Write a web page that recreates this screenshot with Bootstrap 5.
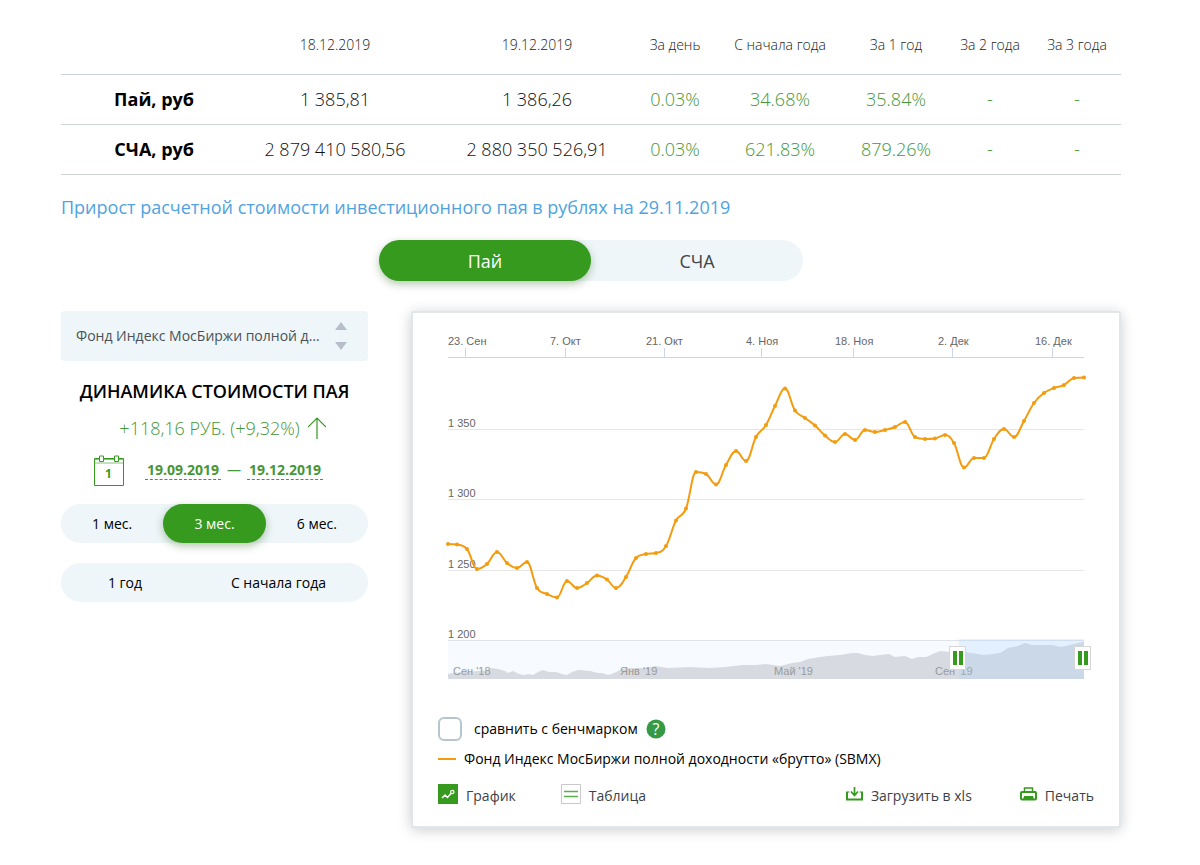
<!DOCTYPE html>
<html lang="ru">
<head>
<meta charset="utf-8">
<meta name="viewport" content="width=device-width, initial-scale=1">
<title>Динамика стоимости пая</title>
<link href="https://cdn.jsdelivr.net/npm/bootstrap@5.3.0/dist/css/bootstrap.min.css" rel="stylesheet">
<style>
  body { font-family: "Open Sans", "Noto Sans", sans-serif; font-size: 14px; line-height: 20px; color: #000; background: #fff; }
  .page { padding: 24px 79px 24px 61px; }
  .green { color: #46963a; }
  .rates { table-layout: fixed; font-weight: 300; text-align: center; }
  .rates th, .rates td { height: 50px; padding: 0; border-bottom: 1px solid #cbd3d6; vertical-align: middle; font-size: 18px; background: none; }
  .rates thead th { font-size: 14px; font-weight: 300; padding-bottom: 8px; color: #1a1a1a; }
  .rates tbody th { font-weight: 700; text-align: right; padding-right: 40px; }
  .rates tbody td { color: #111; }
  .rates tbody td.green { color: #46963a; }
  .rates tr > :last-child { padding-right: 3px; }
  .c-name { width: 173px; } .c-date { width: 202px; } .c-day { width: 74px; } .c-ytd { width: 136px; }
  .c-y1 { width: 96px; } .c-y2 { width: 92px; } .c-y3 { width: 85px; }
  .subtitle { font-size: 18px; line-height: 24px; font-weight: 400; color: #50a3e0; margin: 20px 0 21px; }
  .pills { background: #eef6f9; border-radius: 21px; }
  .pills button { border: 0; background: none; border-radius: 21px; height: 39px; padding: 1px 0 0; color: #000; }
  .pills .on { background: #359a1e; color: #fff; box-shadow: 0 3px 8px rgba(40, 90, 20, .35); }
  .tabs-main { width: 424px; margin: 0 auto 30px; }
  .tabs-main button { height: 41px; font-size: 18px; color: #444; }
  .main-grid { gap: 43px; }
  .side { width: 307px; }
  .fund { appearance: none; height: 50px; border: 0; border-radius: 4px; background: #eef6f9; color: #4a5157; padding: 0 45px 0 15px; text-overflow: ellipsis; }
  .fund-arrows { right: 21px; top: 10px; pointer-events: none; }
  .side h2 { font-size: 18px; line-height: 24px; font-weight: 600; margin: 18px 0 12px; }
  .gain { font-size: 18px; line-height: 26px; font-weight: 300; padding-left: 16px; }
  .dates { margin: 14px 0 18px 33px; font-weight: 700; gap: 21px; }
  .date-range { gap: 6px; }
  .dates a { color: #46963a; border-bottom: 1px dashed #46963a; text-decoration: none; padding: 0 2px; line-height: 19px; }
  .periods { margin-bottom: 20px; }
  .chart-card { border: 2px solid #e1e6ea; border-radius: 2px; box-shadow: 0 2px 14px rgba(0, 0, 0, .2); padding: 12px 25px 18px; min-width: 0; }
  .chart-card svg.plot { font: 11px "Liberation Sans", sans-serif; width: 100%; height: auto; display: block; overflow: visible; }
  .compare { margin-top: 32px; }
  .form-check-input.bench[type=checkbox] { width: 24px; height: 24px; margin: 0; border: 2px solid #b7c5ce; border-radius: 6px; }
  .legend-line { width: 18px; height: 2px; background: #f39c0f; }
  .help { background: none; border: 0; padding: 0; }
  .tools { margin-top: 15px; }
  .tools a { color: #3c4248; text-decoration: none; }
  .tools svg { margin-bottom: 4px; }
  .tab-chart { margin-right: 45px; }
</style>
</head>
<body>
<main class="page">
  <table class="rates w-100">
    <colgroup><col class="c-name"><col class="c-date"><col class="c-date"><col class="c-day"><col class="c-ytd"><col class="c-y1"><col class="c-y2"><col class="c-y3"></colgroup>
    <thead>
      <tr><th></th><th scope="col">18.12.2019</th><th scope="col">19.12.2019</th><th scope="col">За день</th><th scope="col">С начала года</th><th scope="col">За 1 год</th><th scope="col">За 2 года</th><th scope="col">За 3 года</th></tr>
    </thead>
    <tbody>
      <tr><th scope="row">Пай, руб</th><td>1 385,81</td><td>1 386,26</td><td class="green">0.03%</td><td class="green">34.68%</td><td class="green">35.84%</td><td class="green">-</td><td class="green">-</td></tr>
      <tr><th scope="row">СЧА, руб</th><td>2 879 410 580,56</td><td>2 880 350 526,91</td><td class="green">0.03%</td><td class="green">621.83%</td><td class="green">879.26%</td><td class="green">-</td><td class="green">-</td></tr>
    </tbody>
  </table>

  <h1 class="subtitle">Прирост расчетной стоимости инвестиционного пая в рублях на 29.11.2019</h1>

  <div class="pills tabs-main d-flex">
    <button type="button" class="on w-50">Пай</button>
    <button type="button" class="w-50">СЧА</button>
  </div>

  <div class="main-grid d-flex align-items-start">
    <aside class="side flex-shrink-0">
      <div class="position-relative">
        <select class="fund w-100" aria-label="Фонд">
          <option>Фонд Индекс МосБиржи полной доходности «брутто» (SBMX)</option>
        </select>
        <svg class="fund-arrows position-absolute" width="12" height="30" aria-hidden="true"><path d="M6 1l6 8H0zM6 29l6-8H0z" fill="#b5bfc9"/></svg>
      </div>
      <h2 class="text-center">ДИНАМИКА СТОИМОСТИ ПАЯ</h2>
      <div class="gain green d-flex justify-content-center align-items-center gap-2">
        <span>+118,16 РУБ. (+9,32%)</span>
        <svg width="18" height="22" fill="none" stroke="#359a1e" stroke-width="1.2" aria-hidden="true"><path d="M9 22V1M0 10L9 1l9 9"/></svg>
      </div>
      <div class="dates green d-flex align-items-center">
        <svg width="30" height="31" fill="none" stroke="#359a1e" aria-hidden="true">
          <path d="M.5 3.5h29v27H.5z"/><path d="M1 4.500h28M1 8h28" stroke-opacity=".6"/><path d="M5.500 1h4v5.500h-4zM20.500 1h4v5.500h-4z" fill="#fff"/>
          <text x="11" y="23" font-size="12" font-weight="700" fill="#359a1e" stroke="none">1</text>
        </svg>
        <div class="date-range d-flex align-items-center">
          <a href="#">19.09.2019</a><span class="fw-normal">—</span><a href="#">19.12.2019</a>
        </div>
      </div>
      <div class="pills periods d-flex">
        <button type="button" class="flex-fill w-25">1 мес.</button>
        <button type="button" class="flex-fill w-25 on">3 мес.</button>
        <button type="button" class="flex-fill w-25">6 мес.</button>
      </div>
      <div class="pills d-flex">
        <button type="button" class="col-5">1 год</button>
        <button type="button" class="flex-fill">С начала года</button>
      </div>
    </aside>

    <section class="chart-card flex-fill">
      <svg class="plot" viewBox="0 0 656 360" role="img" aria-label="График стоимости пая">
        <path d="M10 104.5h636M10 174.5h636M10 245.5h636" stroke="#e6e6e6"/>
        <path d="M10 32.5h636M27.5 23v9M127.5 23v9M226.5 23v9M323.5 23v9M415.5 23v9M514.5 23v9M614.5 23v9" stroke="#ccd6eb" fill="none"/>
        <g fill="#666">
          <text x="10" y="20">23. Сен</text><text x="112" y="20">7. Окт</text><text x="208" y="20">21. Окт</text><text x="308" y="20">4. Ноя</text><text x="397" y="20">18. Ноя</text><text x="500" y="20">2. Дек</text><text x="597" y="20">16. Дек</text>
          <text x="10" y="102">1 350</text><text x="10" y="172">1 300</text><text x="10" y="243">1 250</text><text x="10" y="313">1 200</text>
        </g>
        <rect x="10" y="315" width="636" height="39" fill="#f7fbff"/>
        <path d="M10 315.5h636" stroke="#dfe4ea"/>
        <path id="history" fill="#d7dbe1"/>
        <g fill="#999"><text x="15" y="350">Сен '18</text><text x="182" y="350">Янв '19</text><text x="336" y="350">Май '19</text><text x="497" y="350">Сен '19</text></g>
        <rect x="521" y="314" width="125" height="40" fill="#a8d0ff" fill-opacity=".25"/>
        <g id="handles"></g>
        <path id="price" fill="none" stroke="#f39c0f" stroke-width="2" stroke-linejoin="round"/>
        <g id="dots" fill="#f39c0f"></g>
      </svg>
      <div class="compare d-flex align-items-center">
        <input class="form-check-input bench" type="checkbox" id="bench">
        <label for="bench" class="ms-2 ps-1">сравнить с бенчмарком</label>
        <button type="button" class="help ms-2 d-flex" aria-label="Справка">
          <svg width="20" height="20" aria-hidden="true"><circle cx="10" cy="10" r="9.5" fill="#359a43"/><text x="10" y="16" text-anchor="middle" font-size="16" fill="#fff">?</text></svg>
        </button>
      </div>
      <div class="d-flex align-items-center mt-2"><span class="legend-line me-2"></span>Фонд Индекс МосБиржи полной доходности «брутто» (SBMX)</div>
      <div class="tools d-flex align-items-center">
        <a href="#" class="tab-chart d-flex align-items-center gap-2">
          <svg width="20" height="20" aria-hidden="true"><path d="M0 0h20v20H0z" fill="#359a1e"/><path d="M4 14l3-3 2.500 2.500L13 9.500" fill="none" stroke="#fff" stroke-width="1.500"/><circle cx="14.300" cy="8" r="1.700" fill="none" stroke="#fff" stroke-width="1.200"/></svg>График</a>
        <a href="#" class="d-flex align-items-center gap-2 me-auto">
          <svg width="20" height="20" fill="none" aria-hidden="true"><path d="M.5.5h19v19H.5z" stroke="#c8c8c8"/><path d="M3 7.500h14M3 12.500h14" stroke="#5aae4c" stroke-width="1.500"/></svg>Таблица</a>
        <a href="#" class="d-flex align-items-center me-5">
          <svg class="me-2" width="17" height="14" fill="none" stroke="#359a1e" stroke-width="2" aria-hidden="true"><path d="M1 5v7.500h15V5"/><path d="M0 5h3.500M13.500 5H17" stroke-width="1"/><path d="M8.500 0v8M5 4.500L8.500 8.500 12 4.500" stroke-width="1.700"/></svg>Загрузить в xls</a>
        <a href="#" class="d-flex align-items-center">
          <svg class="me-2" width="17" height="14" aria-hidden="true"><path d="M4.500 4.500v-3.500h8v3.500" fill="none" stroke="#359a1e" stroke-width="1.500"/><rect x="1" y="5" width="15" height="7.500" rx="1" fill="none" stroke="#359a1e" stroke-width="2"/><path d="M4 9h9l1 4H3z" fill="#359a1e"/></svg>Печать</a>
      </div>
    </section>
  </div>
</main>
<script src="https://cdn.jsdelivr.net/npm/bootstrap@5.3.0/dist/js/bootstrap.bundle.min.js"></script>
<script>
  // Daily price points, in plot units
  const price = [[10,219],[19,219.5],[29,224],[39,244],[49,239],[59,227],[69,238],[79,243],[89,237],[99,263],[109,269],[119,272.5],[129,256],[139,263],[149,258],[159,250.5],[169,254.5],[178,263],[188,252],[198,233],[208,229],[218,228],[228,221],[238,195.5],[248,183.5],[258,147],[268,149],[278,159.5],[288,140],[298,126],[308,136],[318,112],[328,100],[337,81],[347,63.5],[357,85.5],[367,93],[377,100.5],[387,110.5],[397,117],[407,109],[417,115],[427,105],[437,107],[447,105],[457,102],[467,97],[477,112],[487,114],[497,113.5],[507,110],[516,118],[526,142.5],[536,133],[546,133],[556,114],[566,104],[576,112],[586,96],[596,78],[606,68],[616,63],[626,60],[636,53],[646,52.5]];
  // Whole-period price history shown in the range selector
  const periodHistory = [[10,349],[15,348],[27,347],[40,346],[50,345],[54,343],[60,344],[67,346],[70,348],[75,346],[81,349],[86,350],[90,349],[95,350],[100,347],[105,345],[111,347],[118,347],[124,349],[129,350],[134,347],[140,345],[152,346],[160,348],[164,348],[170,350],[176,348],[184,344],[192,343],[207,343],[218,341],[223,342],[230,343],[252,342],[272,343],[287,342],[304,340],[317,340],[328,339],[342,341],[354,338],[362,337],[370,334],[382,332],[390,331],[402,330],[414,328],[420,328],[427,330],[435,331],[442,330],[451,329],[457,332],[467,331],[474,334],[480,332],[488,332],[497,328],[502,326],[512,327],[519,328],[527,327],[537,328.5],[546,330],[555,329],[562,328],[570,323],[580,321],[587,318],[594,320],[604,320],[614,320],[623,322],[632,320],[640,318],[646,317]];
  const svgNS = 'http://www.w3.org/2000/svg';
  const add = (parent, tag, attrs) => {
    const el = document.createElementNS(svgNS, tag);
    for (const k in attrs) el.setAttribute(k, attrs[k]);
    parent.appendChild(el);
  };
  // Smooth line: control points level out at local peaks and dips
  function spline(p) {
    let d = 'M' + p[0], rx = p[0][0], ry = p[0][1];
    for (let i = 1; i < p.length; i++) {
      const [x, y] = p[i], [px, py] = p[i - 1];
      let lx = x, ly = y, nrx = x, nry = y;
      if (i < p.length - 1) {
        const [nx, ny] = p[i + 1];
        lx = (1.5 * x + px) / 2.5; ly = (1.5 * y + py) / 2.5;
        nrx = (1.5 * x + nx) / 2.5; nry = (1.5 * y + ny) / 2.5;
        const c = (nry - ly) * (nrx - x) / (nrx - lx) + y - nry;
        ly += c; nry += c;
        if (ly > py && ly > y) { ly = Math.max(py, y); nry = 2 * y - ly; }
        else if (ly < py && ly < y) { ly = Math.min(py, y); nry = 2 * y - ly; }
        if (nry > ny && nry > y) { nry = Math.max(ny, y); ly = 2 * y - nry; }
        else if (nry < ny && nry < y) { nry = Math.min(ny, y); ly = 2 * y - nry; }
      }
      d += 'C' + [rx, ry, lx, ly, x, y];
      rx = nrx; ry = nry;
    }
    return d;
  }
  document.getElementById('price').setAttribute('d', spline(price));
  document.getElementById('history').setAttribute('d', 'M10 354L' + periodHistory.join('L') + 'L646 354Z');
  price.forEach(([x, y]) => add(document.getElementById('dots'), 'circle', { cx: x, cy: y, r: 2 }));
  [512, 637].forEach(x => {
    const g = document.getElementById('handles');
    add(g, 'rect', { x: x - .5, y: 321.5, width: 16, height: 23, fill: '#fff', stroke: '#d6d6d6' });
    add(g, 'rect', { x: x + 3, y: 326, width: 4, height: 14, fill: '#359a1e' });
    add(g, 'rect', { x: x + 9, y: 326, width: 4, height: 14, fill: '#359a1e' });
  });
</script>
</body>
</html>
